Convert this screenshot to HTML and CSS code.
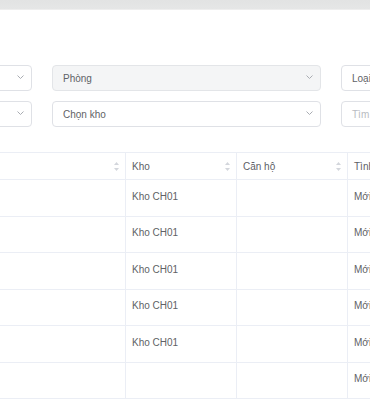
FILE: index.html
```html
<!DOCTYPE html>
<html lang="vi">
<head>
<meta charset="utf-8">
<title>Kho</title>
<link rel="stylesheet" href="styles.css">
</head>
<body>
<div class="topbar"></div>
<div class="filters">
  <div class="select"><span class="value"></span><svg class="chev" viewBox="0 0 7 4" width="7" height="4"><polyline points="0.5,0.5 3.5,3.5 6.5,0.5"/></svg></div>
  <div class="select disabled"><span class="value">Phòng</span><svg class="chev" viewBox="0 0 7 4" width="7" height="4"><polyline points="0.5,0.5 3.5,3.5 6.5,0.5"/></svg></div>
  <div class="select"><span class="value">Loại phòng</span><svg class="chev" viewBox="0 0 7 4" width="7" height="4"><polyline points="0.5,0.5 3.5,3.5 6.5,0.5"/></svg></div>
  <div class="select"><span class="value"></span><svg class="chev" viewBox="0 0 7 4" width="7" height="4"><polyline points="0.5,0.5 3.5,3.5 6.5,0.5"/></svg></div>
  <div class="select"><span class="value">Chọn kho</span><svg class="chev" viewBox="0 0 7 4" width="7" height="4"><polyline points="0.5,0.5 3.5,3.5 6.5,0.5"/></svg></div>
  <div class="select"><span class="value placeholder">Tìm kiếm</span></div>
</div>
<div class="table">
  <div class="row head">
    <div class="cell"><span class="label">Phòng</span><svg class="sort" viewBox="0 0 5 9" width="5" height="9"><polygon points="2.5,0 5,3 0,3"/><polygon points="0,6 5,6 2.5,9"/></svg></div>
    <div class="cell"><span class="label">Kho</span><svg class="sort" viewBox="0 0 5 9" width="5" height="9"><polygon points="2.5,0 5,3 0,3"/><polygon points="0,6 5,6 2.5,9"/></svg></div>
    <div class="cell"><span class="label">Căn hộ</span><svg class="sort" viewBox="0 0 5 9" width="5" height="9"><polygon points="2.5,0 5,3 0,3"/><polygon points="0,6 5,6 2.5,9"/></svg></div>
    <div class="cell"><span class="label">Tình trạng</span></div>
  </div>
  <div class="row"><div class="cell"></div><div class="cell">Kho CH01</div><div class="cell"></div><div class="cell">Mới</div></div>
  <div class="row"><div class="cell"></div><div class="cell">Kho CH01</div><div class="cell"></div><div class="cell">Mới</div></div>
  <div class="row"><div class="cell"></div><div class="cell">Kho CH01</div><div class="cell"></div><div class="cell">Mới</div></div>
  <div class="row"><div class="cell"></div><div class="cell">Kho CH01</div><div class="cell"></div><div class="cell">Mới</div></div>
  <div class="row"><div class="cell"></div><div class="cell">Kho CH01</div><div class="cell"></div><div class="cell">Mới</div></div>
  <div class="row"><div class="cell"></div><div class="cell"></div><div class="cell"></div><div class="cell">Mới</div></div>
</div>
</body>
</html>
```

FILE: styles.css
```css
html, body {
  margin: 0;
  padding: 0;
  overflow: hidden;
  background: #ffffff;
}

body {
  width: 370px;
  height: 400px;
  font-family: "Liberation Sans", Arial, Helvetica, sans-serif;
  font-size: 10px;
  color: #606266;
}

.topbar {
  height: 9px;
  background: linear-gradient(#e2e3e3, #e5e6e6);
  border-bottom: 1px solid #eeeeee;
}

.filters {
  display: grid;
  grid-template-columns: 120px 269px 120px;
  grid-auto-rows: 26px;
  column-gap: 20px;
  row-gap: 10px;
  margin: 55px 0 0 -88px;
  width: 549px;
}

.select {
  box-sizing: border-box;
  display: flex;
  align-items: center;
  border: 1px solid #dfe1e6;
  border-radius: 4px;
  background: #ffffff;
  padding: 0 7px 0 10px;
  overflow: hidden;
  white-space: nowrap;
}

.select.disabled {
  background: #f4f5f6;
  border-color: #e3e5e8;
}

.value {
  flex: 1;
  color: #5f6266;
}

.placeholder {
  color: #b9bcc2;
}

.chev {
  flex: none;
  margin-top: -2px;
}

.chev polyline {
  fill: none;
  stroke: #a9acb2;
  stroke-width: 1;
}

.table {
  margin: 25px 0 0 -88px;
  width: 549px;
  border-top: 1px solid #ebeef5;
}

.row {
  display: grid;
  grid-template-columns: 214px 111px 111px 113px;
  box-sizing: border-box;
  height: 36.5px;
  border-bottom: 1px solid #ebeef5;
}

.row.head {
  height: 27px;
}

.cell {
  box-sizing: border-box;
  display: flex;
  align-items: center;
  padding: 0 6px 3px 6px;
  border-right: 1px solid #ebeef5;
  white-space: nowrap;
  overflow: hidden;
}

.head .cell {
  padding-bottom: 0;
}

.label {
  flex: 1;
  color: #5d6066;
}

.head .cell:first-child .label {
  visibility: hidden;
}

.sort {
  flex: none;
  margin-right: 0;
}

.sort polygon {
  fill: #d3d6dc;
}
```
